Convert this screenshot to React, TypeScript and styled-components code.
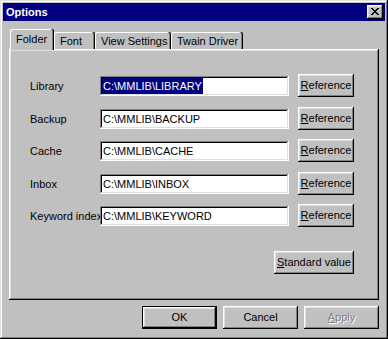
import React from 'react'
import styled, { createGlobalStyle, css } from 'styled-components'

const GlobalStyle = createGlobalStyle`
  html, body {
    margin: 0;
    padding: 0;
    background: #c0c0c0;
  }
  body {
    font-family: "Liberation Sans", Arial, sans-serif;
    font-size: 11px;
    color: #000;
  }
`

const raised = css`
  box-shadow: inset -1px -1px #000, inset 1px 1px #fff, inset -2px -2px #808080, inset 2px 2px #dfdfdf;
`

const Window = styled.div`
  box-sizing: border-box;
  width: 388px;
  height: 339px;
  padding: 3px;
  background: #c0c0c0;
  box-shadow: inset -1px -1px #000, inset 1px 1px #dfdfdf, inset -2px -2px #808080, inset 2px 2px #fff;
  display: flex;
  flex-direction: column;
`

const TitleBar = styled.div`
  height: 18px;
  background: #000080;
  color: #fff;
  display: flex;
  align-items: center;
  justify-content: space-between;
  padding: 0 2px 0 3px;
`

const Title = styled.span`
  font-weight: bold;
  line-height: 13px;
`

const CloseButton = styled.div`
  box-sizing: border-box;
  width: 16px;
  height: 14px;
  padding: 3px 0 0 4px;
  background: #c0c0c0;
  ${raised};

  svg {
    display: block;
  }
`

const Body = styled.div`
  padding: 8px 6px 0 6px;
`

const TabStrip = styled.div`
  display: flex;
  align-items: flex-end;
  height: 20px;
  padding-left: 1px;
  position: relative;
  z-index: 1;
`

const Tab = styled.div<{ $w: number; $active?: boolean }>`
  box-sizing: border-box;
  width: ${p => p.$w}px;
  height: ${p => (p.$active ? 21 : 17)}px;
  margin-bottom: ${p => (p.$active ? -1 : 0)}px;
  padding: ${p => (p.$active ? 3 : 2)}px 0 0 6px;
  line-height: 14px;
  white-space: nowrap;
  background: #c0c0c0;
  border-radius: 2px 2px 0 0;
  box-shadow: inset -1px 0 #000, inset -2px 0 #808080, inset 1px 1px #fff;
`

const Panel = styled.div`
  box-sizing: border-box;
  height: 251px;
  padding: 25px 0 0 21px;
  background: #c0c0c0;
  ${raised};
`

const Rows = styled.div`
  width: 324px;
  display: flex;
  flex-direction: column;
`

const Row = styled.div`
  display: flex;
  align-items: center;
  height: 23px;

  &:nth-child(even) {
    margin-top: 10px;
  }
  &:nth-child(odd):not(:first-child) {
    margin-top: 9px;
  }
`

const Label = styled.span`
  width: 70px;
  white-space: nowrap;
`

const Field = styled.div`
  box-sizing: border-box;
  width: 189px;
  height: 20px;
  margin-right: 9px;
  padding: 2px;
  background: #fff;
  box-shadow: inset -1px -1px #fff, inset 1px 1px #808080, inset -2px -2px #dfdfdf, inset 2px 2px #000;
  white-space: nowrap;
  overflow: hidden;
`

const FieldText = styled.span<{ $selected?: boolean }>`
  display: inline-block;
  line-height: 16px;
  padding: 0 1px;
  background: ${p => (p.$selected ? '#000080' : 'transparent')};
  color: ${p => (p.$selected ? '#fff' : '#000')};
`

const Button = styled.button<{ $w: number; $default?: boolean }>`
  box-sizing: border-box;
  width: ${p => p.$w}px;
  height: 23px;
  padding: 0;
  margin: 0;
  font: inherit;
  line-height: 13px;
  color: #000;
  background: #c0c0c0;
  border: ${p => (p.$default ? '1px solid #000' : 'none')};
  ${raised};
  white-space: nowrap;

  &:disabled {
    color: #808080;
    text-shadow: 1px 1px #fff;
  }
`

const PanelFooter = styled.div`
  display: flex;
  justify-content: flex-end;
  margin-top: 24px;
`

const Actions = styled.div`
  display: flex;
  justify-content: flex-end;
  gap: 6px;
  margin-top: 6px;
`

const folders = [
  { label: 'Library', path: 'C:\\MMLIB\\LIBRARY', selected: true },
  { label: 'Backup', path: 'C:\\MMLIB\\BACKUP' },
  { label: 'Cache', path: 'C:\\MMLIB\\CACHE' },
  { label: 'Inbox', path: 'C:\\MMLIB\\INBOX' },
  { label: 'Keyword index', path: 'C:\\MMLIB\\KEYWORD' },
]

const tabs = [
  { name: 'Folder', w: 44 },
  { name: 'Font', w: 41 },
  { name: 'View Settings', w: 76 },
  { name: 'Twain Driver', w: 72 },
]

const CloseGlyph = () => (
  <svg width="8" height="7" viewBox="0 0 8 7" shapeRendering="crispEdges">
    <path
      fill="#000"
      d="M0 0h2v1H0zM6 0h2v1H6zM1 1h2v1H1zM5 1h2v1H5zM2 2h4v1H2zM3 3h2v1H3zM2 4h4v1H2zM1 5h2v1H1zM5 5h2v1H5zM0 6h2v1H0zM6 6h2v1H6z"
    />
  </svg>
)

export default function App() {
  return (
    <>
      <GlobalStyle />
      <Window>
        <TitleBar>
          <Title>Options</Title>
          <CloseButton>
            <CloseGlyph />
          </CloseButton>
        </TitleBar>
        <Body>
          <TabStrip>
            {tabs.map((t, i) => (
              <Tab key={t.name} $w={t.w} $active={i === 0}>
                {t.name}
              </Tab>
            ))}
          </TabStrip>
          <Panel>
            <Rows>
              {folders.map(f => (
                <Row key={f.label}>
                  <Label>{f.label}</Label>
                  <Field>
                    <FieldText $selected={f.selected}>{f.path}</FieldText>
                  </Field>
                  <Button $w={56}>
                    <u>R</u>eference
                  </Button>
                </Row>
              ))}
              <PanelFooter>
                <Button $w={80}>
                  <u>S</u>tandard value
                </Button>
              </PanelFooter>
            </Rows>
          </Panel>
          <Actions>
            <Button $w={75} $default>
              OK
            </Button>
            <Button $w={75}>Cancel</Button>
            <Button $w={75} disabled>
              <u>A</u>pply
            </Button>
          </Actions>
        </Body>
      </Window>
    </>
  )
}
